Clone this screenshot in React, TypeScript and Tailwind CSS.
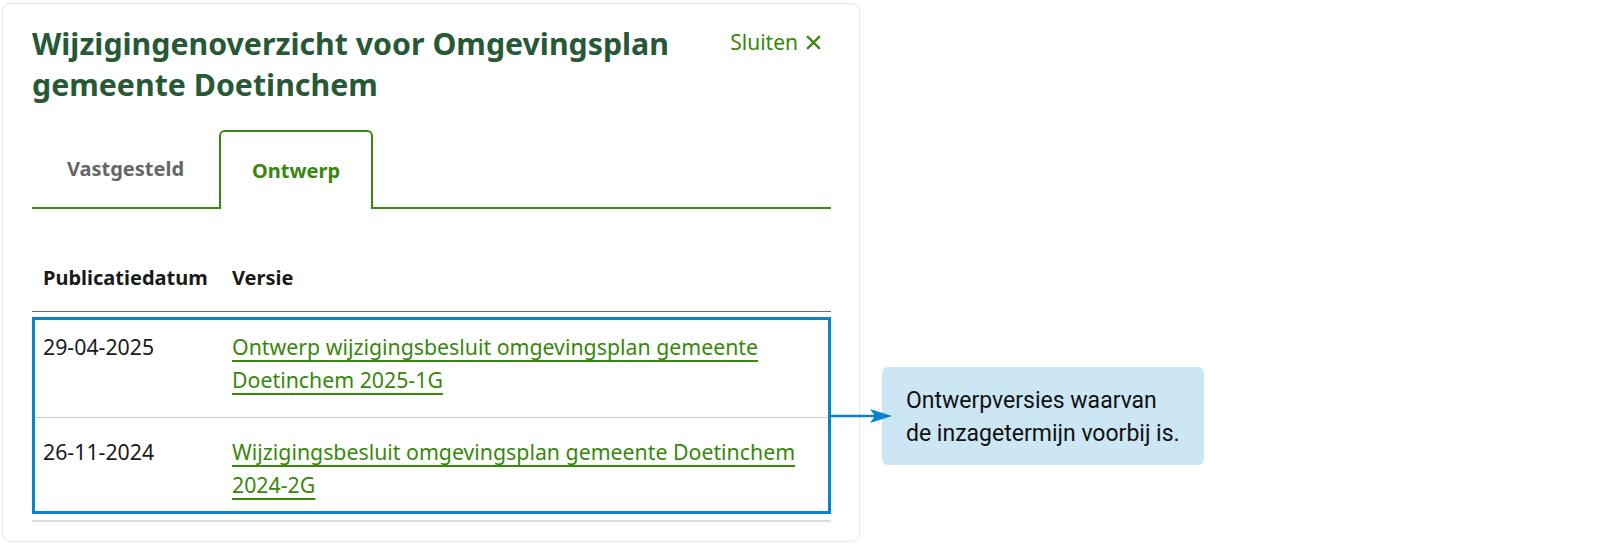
import React from "react";

const sans = { fontFamily: '"Noto Sans", "Open Sans", Arial, sans-serif' };

function CloseIcon() {
  return (
    <svg width="17" height="17" viewBox="0 0 16 16" className="ml-[7px]" fill="none">
      <path d="M2 2 L14 14 M14 2 L2 14" stroke="#39870c" strokeWidth="2" strokeLinecap="butt" />
    </svg>
  );
}

export default function App() {
  const rows = [
    { date: "29-04-2025", l1: "Ontwerp wijzigingsbesluit omgevingsplan gemeente", l2: "Doetinchem 2025-1G" },
    { date: "26-11-2024", l1: "Wijzigingsbesluit omgevingsplan gemeente Doetinchem", l2: "2024-2G" },
  ];
  return (
    <div className="w-[1600px] h-[544px] bg-white flex items-start" style={sans}>
      <div className="ml-[2px] mt-[3px] w-[858px] h-[539px] border border-[#e8e8e8] rounded-[8px] pl-[29px] pr-[28px] pt-[19px]">
        <div className="flex justify-between items-start">
          <h1 className="w-[690px] text-[30.3px] leading-[41px] font-bold text-[#275937]">
            Wijzigingenoverzicht voor Omgevingsplan<br />gemeente Doetinchem
          </h1>
          <button className="flex items-center mt-[5px] mr-[9px] text-[21px] leading-[28px] text-[#39870c]">
            Sluiten
            <CloseIcon />
          </button>
        </div>

        <div className="mt-[25px] flex border-b-2 border-[#39870c]">
          <div className="w-[187px] h-[77px] flex items-center justify-center text-[20px] font-bold text-[#666666]">
            Vastgesteld
          </div>
          <div className="w-[154px] h-[79px] -mb-[2px] flex items-center justify-center border-2 border-b-0 border-[#39870c] rounded-t-[6px] bg-white text-[20px] font-bold text-[#39870c]">
            Ontwerp
          </div>
        </div>

        <div className="mt-[54px] flex border-b-[1.5px] border-[#6b6b6b] pb-[18px] text-[20px] leading-[30px] font-bold text-[#1a1a1a]">
          <div className="w-[190px] pl-[11px]">Publicatiedatum</div>
          <div className="pl-[10px]">Versie</div>
        </div>

        <div className="relative border-b-2 border-[#dddddd]">
          {rows.map((r, i) => (
            <div
              key={r.date}
              className={`flex text-[21.3px] leading-[33px] ${i === 0 ? "pt-[18px] pb-[21px] border-b border-[#cccccc]" : "pt-[17px] pb-[19px]"}`}
            >
              <div className="w-[190px] pl-[11px] text-[#1a1a1a]">{r.date}</div>
              <div className="flex-1 pl-[10px] pr-[10px]">
                <a href="#" className="text-[#39870c] underline underline-offset-[5px] decoration-[1.5px]">
                  {r.l1}
                  <br />
                  {r.l2}
                </a>
              </div>
            </div>
          ))}
          <div className="absolute left-0 right-0 top-[5px] bottom-[6px] border-[3px] border-[#0b85c9] pointer-events-none" />
        </div>
      </div>

      <div className="relative ml-[22px] mt-[367px] w-[322px] h-[98px] rounded-[6px] bg-[#cce6f3] pl-[24px] pt-[17px] text-[23px] leading-[33px] text-[#111111]" style={{ fontFamily: 'Roboto, "Noto Sans", sans-serif' }}>
        <svg className="absolute left-[-52px] top-[39px]" width="62" height="20" viewBox="0 0 62 20">
          <line x1="0" y1="10" x2="46" y2="10" stroke="#0b85c9" strokeWidth="2.5" />
          <path d="M40 3 L62 10 L40 17 L45 10 Z" fill="#0b85c9" />
        </svg>
        <p>Ontwerpversies waarvan</p>
        <p>de inzagetermijn voorbij is.</p>
      </div>
    </div>
  );
}
